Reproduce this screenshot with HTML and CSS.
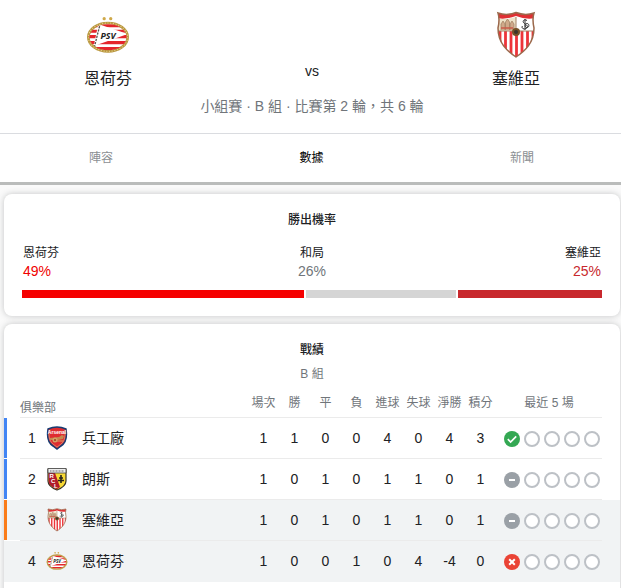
FILE: index.html
```html
<!DOCTYPE html>
<html lang="zh-Hant">
<head>
<meta charset="utf-8">
<meta name="viewport" content="width=device-width, initial-scale=1">
<title>恩荷芬 vs 塞維亞</title>
<link rel="stylesheet" href="styles.css">
</head>
<body>
<svg class="clips" aria-hidden="true">
  <clipPath id="psv-oval"><ellipse cx="22" cy="21" rx="17" ry="12"/></clipPath>
  <clipPath id="sevilla-shield"><path d="M2 2Q11 5 20 1.500Q29 5 38 2Q36 8 38 17C38 32 29 40 20 46C11 40 2 32 2 17Q4 8 2 2z"/></clipPath>
</svg>
<svg class="defs" aria-hidden="true">
  <symbol id="psv" viewBox="0 0 44 38">
    <circle cx="18.500" cy="4" r="1.500" fill="#cfa94a"/><circle cx="24.500" cy="4" r="1.500" fill="#cfa94a"/>
    <ellipse cx="22" cy="21" rx="18" ry="13" fill="#fff" stroke="#b9973f" stroke-width="2.500"/>
    <g clip-path="url(#psv-oval)">
      <path d="M2 10.500h40M2 15.500h40M2 20.500h40M2 26h40M2 31.500h40" stroke="#e4252b" stroke-width="2.800"/>
      <path d="M13 9L40 18 9 29z" fill="#fff"/>
      <path d="M15 8L9 32" stroke="#55504a" stroke-width="1.200" stroke-dasharray="2 1"/>
    </g>
    <ellipse cx="22" cy="21" rx="18" ry="13" fill="none" stroke="#e6d18e" stroke-width="1" stroke-dasharray="1 1.500"/>
    <text x="22" y="23" text-anchor="middle" class="psv-word">PSV</text>
  </symbol>
  <symbol id="sevilla" viewBox="0 0 40 48">
    <g clip-path="url(#sevilla-shield)">
      <path d="M0 0h40v48H0z" fill="#fff"/>
      <path d="M0 0h40v7Q30 9 20 5Q10 9 0 7z" fill="#df3034"/>
      <path d="M4 20v26M9.500 20v26M15 20v26M20.500 20v26M26 20v26M31.500 20v26M37 20v26" stroke="#ed3439" stroke-width="2.800"/>
      <path d="M2 7.500Q11 9 20 6v14H2z" fill="#eee1c7"/>
      <path d="M5 19v-6l2-3 2 3v6M9.500 19v-8l2-3 2 3v8M14 19v-6l2-3 2 3v6" fill="#cfa98a" stroke="#9c7a5d" stroke-width=".7"/>
      <path d="M5 17h12" stroke="#cb5a49" stroke-width="1.500"/>
      <path d="M2 20h36M20 6v14" stroke="#a18167" stroke-width="1"/>
      <path d="M29 8v11M31 9.500c-3-2-5.500 1-2.500 3s5 4 0 5.500c-2.500 0-3-2-2-3M31 12.500c-2.500 0-2.500 4 0 4s2.500-4 0-4" fill="none" stroke="#333" stroke-width="1"/>
    </g>
    <circle cx="20" cy="21" r="4" fill="#755126"/><circle cx="20" cy="21" r="2" fill="#39342b"/>
    <path d="M2 2Q11 5 20 1.500Q29 5 38 2Q36 8 38 17C38 32 29 40 20 46C11 40 2 32 2 17Q4 8 2 2z" fill="none" stroke="#9b684b" stroke-width="1.500"/>
  </symbol>
  <symbol id="arsenal" viewBox="0 0 24 24">
    <path d="M3 3Q12-1 21 3Q23 16 16 20L12 23L8 20Q1 16 3 3z" fill="#df2c30" stroke="#183b71" stroke-width="1.500"/>
    <path d="M4 4Q3 15 8.500 18.500L12 21L15.500 18.500Q21 15 20 4" fill="none" stroke="#d8b58b" stroke-width=".6"/>
    <text x="12" y="8" text-anchor="middle" class="arsenal-word">Arsenal</text>
    <path d="M5 12l9-1 3-2 2 1-1 3-5 1-8 0z" fill="#c58a4e"/><circle cx="10" cy="14" r="2.500" fill="#d3a466"/><circle cx="10" cy="14" r="1" fill="#9a3b25"/><path d="M12 15h6" stroke="#d3a466"/>
  </symbol>
  <symbol id="lens" viewBox="0 0 24 24">
    <path d="M3 2h18v12c0 4-4 7-9 9-5-2-9-5-9-9z" fill="#f8d934" stroke="#383429" stroke-width="1.200"/>
    <path d="M3.600 6h6.400l5 14-3 2.300C7 20 3.600 18 3.600 14z" fill="#b11c2c"/>
    <path d="M3 1.500h18V6H3z" fill="#eee" stroke="#444" stroke-width=".8"/><path d="M5 4h14" stroke="#666" stroke-width="1.200" stroke-dasharray="1 .5"/>
    <path d="M16 8v8M14 11h4M13 13.500h6" stroke="#25231e" stroke-width="1.600"/>
    <text x="4.500" y="11" class="lens-word">R</text><text x="6" y="16" class="lens-word">C</text><text x="9" y="21" class="lens-word">L</text>
  </symbol>
  <symbol id="win" viewBox="0 0 16 16"><circle cx="8" cy="8" r="8" fill="#34a853"/><path d="M3.800 8.200l2.800 2.800 5.600-5.600" fill="none" stroke="#fff" stroke-width="1.700"/></symbol>
  <symbol id="draw" viewBox="0 0 16 16"><circle cx="8" cy="8" r="8" fill="#9aa0a6"/><path d="M5 8h6" stroke="#fff" stroke-width="2"/></symbol>
  <symbol id="loss" viewBox="0 0 16 16"><circle cx="8" cy="8" r="8" fill="#ea4335"/><path d="M5.200 5.200l5.600 5.600M10.800 5.200l-5.600 5.600" stroke="#fff" stroke-width="2"/></symbol>
  <symbol id="empty" viewBox="0 0 16 16"><circle cx="8" cy="8" r="7" fill="#fff" stroke="#bdc1c6" stroke-width="2"/></symbol>
</svg>

<header class="match">
  <div class="teams">
    <div class="team"><svg class="crest"><use href="#psv"/></svg><span>恩荷芬</span></div>
    <span class="versus">vs</span>
    <div class="team"><svg class="crest"><use href="#sevilla"/></svg><span>塞維亞</span></div>
  </div>
  <p class="stage">小組賽 · B 組 · 比賽第 2 輪，共 6 輪</p>
</header>
<nav class="tabs">
  <a href="#lineup">陣容</a>
  <a class="active" href="#stats" aria-current="page">數據</a>
  <a href="#news">新聞</a>
</nav>

<main id="stats">
  <section class="card odds">
    <h2>勝出機率</h2>
    <div class="chances">
      <div class="home"><span>恩荷芬</span><strong>49%</strong></div>
      <div class="tie"><span>和局</span><strong>26%</strong></div>
      <div class="away"><span>塞維亞</span><strong>25%</strong></div>
    </div>
    <div class="meter">
      <i class="meter-home" style="flex-grow:49"></i><i class="meter-tie" style="flex-grow:26"></i><i class="meter-away" style="flex-grow:25"></i>
    </div>
  </section>

  <section class="card standings">
    <h2>戰績</h2>
    <p class="group">B 組</p>
    <table>
      <colgroup><col class="c-edge"><col class="c-rank"><col class="c-logo"><col><col class="c-stat" span="8"><col class="c-form"><col class="c-end"></colgroup>
      <thead>
        <tr><td class="edge"></td><th class="club" colspan="3">俱樂部</th><th>場次</th><th>勝</th><th>平</th><th>負</th><th>進球</th><th>失球</th><th>淨勝</th><th>積分</th><th>最近 5 場</th><td class="edge"></td></tr>
      </thead>
      <tbody>
        <tr class="blue"><td class="edge"></td><td>1</td><td><svg class="badge"><use href="#arsenal"/></svg></td><td class="name">兵工廠</td><td>1</td><td>1</td><td>0</td><td>0</td><td>4</td><td>0</td><td>4</td><td>3</td><td><div class="form"><svg><use href="#win"/></svg><svg><use href="#empty"/></svg><svg><use href="#empty"/></svg><svg><use href="#empty"/></svg><svg><use href="#empty"/></svg></div></td><td class="edge"></td></tr>
        <tr class="blue"><td class="edge"></td><td>2</td><td><svg class="badge"><use href="#lens"/></svg></td><td class="name">朗斯</td><td>1</td><td>0</td><td>1</td><td>0</td><td>1</td><td>1</td><td>0</td><td>1</td><td><div class="form"><svg><use href="#draw"/></svg><svg><use href="#empty"/></svg><svg><use href="#empty"/></svg><svg><use href="#empty"/></svg><svg><use href="#empty"/></svg></div></td><td class="edge"></td></tr>
        <tr class="orange current"><td class="edge"></td><td>3</td><td><svg class="badge"><use href="#sevilla"/></svg></td><td class="name">塞維亞</td><td>1</td><td>0</td><td>1</td><td>0</td><td>1</td><td>1</td><td>0</td><td>1</td><td><div class="form"><svg><use href="#draw"/></svg><svg><use href="#empty"/></svg><svg><use href="#empty"/></svg><svg><use href="#empty"/></svg><svg><use href="#empty"/></svg></div></td><td class="edge"></td></tr>
        <tr class="current"><td class="edge"></td><td>4</td><td><svg class="badge"><use href="#psv"/></svg></td><td class="name">恩荷芬</td><td>1</td><td>0</td><td>0</td><td>1</td><td>0</td><td>4</td><td>-4</td><td>0</td><td><div class="form"><svg><use href="#loss"/></svg><svg><use href="#empty"/></svg><svg><use href="#empty"/></svg><svg><use href="#empty"/></svg><svg><use href="#empty"/></svg></div></td><td class="edge"></td></tr>
      </tbody>
    </table>
  </section>
</main>
</body>
</html>
```
FILE: styles.css
```css
* { box-sizing: border-box; }
body {
  margin: 0;
  background: #fff;
  color: #202124;
  font-family: "Liberation Sans", "Noto Sans CJK TC", sans-serif;
  font-size: 14px;
  line-height: 20px;
}
h2, p { margin: 0; }
svg { display: block; }
.defs { display: none; }
.clips { position: absolute; width: 0; height: 0; }
.psv-word { font: italic bold 8px "Open Sans", sans-serif; fill: #222; }
.arsenal-word { font: bold 5px "Liberation Sans", sans-serif; fill: #fff; }
.lens-word { font: bold 6px "Liberation Sans", sans-serif; fill: #fff; }

.match { padding: 11px 1px 17px 4px; border-bottom: 1px solid #dadce0; }
.teams { display: flex; justify-content: space-between; align-items: flex-end; padding: 0 80px; }
.team { display: flex; flex-direction: column; align-items: center; gap: 8px; font-size: 16px; line-height: 24px; }
.crest { width: 48px; height: 48px; }
.versus { padding-bottom: 10px; }
.stage { margin-top: 5px; text-align: center; color: #70757a; }

.tabs {
  display: flex;
  justify-content: space-between;
  padding: 14px 87px 14px 89px;
  border-bottom: 3px solid #babcbb;
  box-shadow: 0 1px 2px #dadce0;
  font-size: 12px;
}
.tabs a { color: #8b8f93; text-decoration: none; }
.tabs .active { color: #000; }

main { display: flex; flex-direction: column; gap: 8px; padding: 9px 1px 0 4px; background: #fafafa; }
.card { background: #fff; border-radius: 8px; box-shadow: 0 0 6px rgba(60, 64, 67, .28); }
.card h2 { font-size: 12px; font-weight: 500; line-height: 20px; text-align: center; }
.odds { padding: 16px 18px 18px; }
.chances { display: grid; grid-template-columns: 1fr 1fr 1fr; margin-top: 13px; padding: 0 1px; font-size: 12px; }
.chances div { display: flex; flex-direction: column; }
.chances strong { font-size: 14px; font-weight: 400; line-height: 17px; }
.tie { text-align: center; }
.away { text-align: right; }
.home strong { color: #f00000; }
.tie strong { color: #70757a; }
.away strong { color: #c8282d; }
.meter { display: flex; gap: 2px; height: 8px; margin-top: 10px; }
.meter-home { background: #f50000; }
.meter-tie { background: #d5d5d5; }
.meter-away { background: #c8282d; }

.standings { padding: 16px 0 24px; }
.group { margin-top: 4px; text-align: center; color: #70757a; font-size: 12px; }
table { width: 100%; table-layout: fixed; border-collapse: separate; border-spacing: 0; }
.c-edge { width: 16px; }
.c-rank { width: 24px; }
.c-logo { width: 26px; }
.c-stat { width: 31px; }
.c-form { width: 106px; }
.c-end { width: 18px; }
th, td { padding: 0; text-align: center; border-bottom: 1px solid #ebebeb; }
th {
  height: 34px;
  padding-bottom: 4px;
  vertical-align: bottom;
  font-size: 12px;
  font-weight: 400;
  color: #70757a;
  white-space: nowrap;
}
.club { padding: 0; text-align: left; line-height: 18px; }
tbody td { height: 41px; }
tbody tr:last-child td { border-bottom-color: #f1f3f4; }
td.edge { border-bottom-color: transparent; }
.current { background: #f1f3f4; }
.blue .edge:first-child { background: linear-gradient(#4285f4, #4285f4) no-repeat 0 0 / 3px 40px; }
.orange .edge:first-child { background: linear-gradient(#fa7b17, #fa7b17) no-repeat 0 0 / 3px 40px; border-bottom-color: #fff; }
td.name { padding-left: 12px; text-align: left; }
.badge { width: 24px; height: 24px; margin: 0 auto; }
.form { display: flex; gap: 4px; padding: 2px 0 0 8px; }
.form svg { width: 16px; height: 16px; }
```
